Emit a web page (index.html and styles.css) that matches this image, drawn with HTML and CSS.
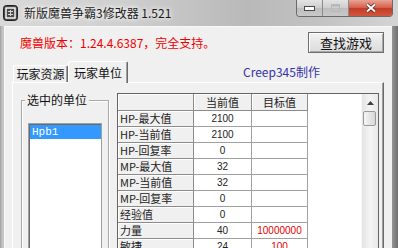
FILE: index.html
```html
<!DOCTYPE html>
<html>
  <head>
    <meta charset="utf-8" />
    <title>新版魔兽争霸3修改器 1.521</title>
    <link rel="stylesheet" href="styles.css">
  </head>
  <body>
    <div id="window">
      <div class="titlebar">
        <svg class="app-icon" width="15" height="16" viewBox="0 0 15 16">
          <rect x="0.5" y="0.5" width="14" height="15" rx="3" fill="#4a4a4a" stroke="#1e1e1e"/>
          <rect x="3" y="3" width="9" height="10" fill="none" stroke="#fff" stroke-width="1.4"/>
          <path d="M5 6.5h5M5 9.5h5M7.5 5v6" stroke="#d8d8d8" stroke-width="1"/>
        </svg>
        <span class="title">新版魔兽争霸3修改器 1.521</span>
        <div class="caption">
          <div class="cap-btn">
            <svg width="11" height="5" viewBox="0 0 11 5"><rect x="0.5" y="0.5" width="10" height="4" fill="#fff" stroke="#4a4a4a"/></svg>
          </div>
          <div class="cap-btn">
            <svg width="9" height="8" viewBox="0 0 9 8"><rect x="0.5" y="0.5" width="8" height="7" fill="none" stroke="#b8b8b8"/><rect x="1" y="1" width="7" height="1.5" fill="#b8b8b8"/></svg>
          </div>
          <div class="cap-btn cap-close">
            <svg width="12" height="10" viewBox="0 0 12 10"><path d="M2 1.5l8 7M10 1.5l-8 7" stroke="#5a2018" stroke-width="3.4"/><path d="M2 1.5l8 7M10 1.5l-8 7" stroke="#fff" stroke-width="2"/></svg>
          </div>
        </div>
      </div>

      <div class="client">
        <div class="top-row">
          <span class="version">魔兽版本：1.24.4.6387，完全支持。</span>
          <button class="find-btn" type="button">查找游戏</button>
        </div>

        <div class="tab-row">
          <div class="tab">玩家资源</div>
          <div class="tab active">玩家单位</div>
          <span class="author">Creep345制作</span>
        </div>

        <div class="tab-panel">
          <fieldset class="unit-group">
            <legend>选中的单位</legend>
            <div class="listbox">
              <div class="list-item selected">Hpb1</div>
            </div>
          </fieldset>

          <div class="grid-view">
            <div class="grid">
              <div class="cell head"></div>
              <div class="cell head">当前值</div>
              <div class="cell head">目标值</div>

              <div class="cell name">HP-最大值</div><div class="cell val">2100</div><div class="cell val"></div>
              <div class="cell name">HP-当前值</div><div class="cell val">2100</div><div class="cell val"></div>
              <div class="cell name">HP-回复率</div><div class="cell val">0</div><div class="cell val"></div>
              <div class="cell name">MP-最大值</div><div class="cell val">32</div><div class="cell val"></div>
              <div class="cell name">MP-当前值</div><div class="cell val">32</div><div class="cell val"></div>
              <div class="cell name">MP-回复率</div><div class="cell val">0</div><div class="cell val"></div>
              <div class="cell name">经验值</div><div class="cell val">0</div><div class="cell val"></div>
              <div class="cell name">力量</div><div class="cell val">40</div><div class="cell val target">10000000</div>
              <div class="cell name">敏捷</div><div class="cell val">24</div><div class="cell val target">100</div>
            </div>
            <div class="grid-empty"></div>
            <div class="vscroll">
              <div class="scroll-up">
                <svg width="7" height="4" viewBox="0 0 7 4"><path d="M0 4L3.5 0L7 4z" fill="#404040"/></svg>
              </div>
              <div class="scroll-thumb"></div>
            </div>
          </div>
        </div>
      </div>
    </div>
  </body>
</html>
```

FILE: styles.css
```css
/* Old-style WinForms trainer window */
body {
  margin: 0;
  padding: 0;
  width: 398px;
  height: 248px;
  overflow: hidden;
  font-family: "Noto Sans CJK SC", "Liberation Sans", sans-serif;
  font-size: 12px;
  color: #111;
}
#window {
  width: 398px;
  height: 248px;
  background: linear-gradient(to right, #9c9c9c 0, #c4c4c4 2px, #c9c9c9 60%, #bcbcbc 97%, #6e6e6e 100%);
  display: flex;
  flex-direction: column;
}
.titlebar {
  height: 26px;
  flex: none;
  display: flex;
  align-items: flex-start;
  background: linear-gradient(to right, #d9d9d9, #cfcfcf 30%, #b9b9b9 62%, #c2c2c2 80%, #d4d4d4);
}
.app-icon {
  margin: 5px 0 0 3px;
  flex: none;
}
.title {
  margin: 5px 0 0 6px;
  line-height: 16px;
  font-size: 12px;
  color: #1a1a1a;
  text-shadow: 0 0 4px #fff, 0 0 6px rgba(255, 255, 255, 0.9);
}
.caption {
  margin-left: auto;
  margin-right: 5px;
  display: flex;
  border: 1px solid #6a6a6a;
  border-top: none;
  border-radius: 0 0 4px 4px;
  overflow: hidden;
}
.cap-btn {
  width: 25px;
  height: 16px;
  display: flex;
  align-items: center;
  justify-content: center;
  background: linear-gradient(#e4e4e4, #cdcdcd 50%, #bdbdbd 51%, #c9c9c9);
  border-right: 1px solid #8c8c8c;
}
.cap-close {
  width: 43px;
  border-right: none;
  background: linear-gradient(#e8a393, #d4604c 48%, #c53c27 52%, #d2553d);
}
.client {
  flex: 1;
  margin-left: 4px;
  margin-right: 6px;
  background-color: #f0f0f0;
  border-top: 1px solid #f9f9f9;
  border-left: 1px solid #f9f9f9;
  display: flex;
  flex-direction: column;
}
.top-row {
  display: flex;
  align-items: center;
  justify-content: space-between;
  padding: 5px 8px 0 15px;
}
.version {
  color: #f00000;
  line-height: 16px;
}
.find-btn {
  width: 76px;
  height: 21px;
  padding: 0;
  font-family: "Noto Sans CJK SC", sans-serif;
  font-size: 13px;
  line-height: 17px;
  color: #111;
  border: 1px solid #6e6e6e;
  background: linear-gradient(#f4f4f4, #e6e6e6 50%, #dcdcdc);
  box-shadow: inset 1px 1px 0 #fff, inset -1px -1px 0 #a8a8a8;
}
.tab-row {
  height: 29px;
  display: flex;
  align-items: flex-end;
  padding-left: 8px;
}
.tab {
  width: 55px;
  height: 17px;
  box-sizing: border-box;
  display: flex;
  align-items: center;
  justify-content: center;
  line-height: 14px;
  background-color: #f0f0f0;
  border-top: 1px solid #fff;
  border-left: 1px solid #fff;
  border-right: 1px solid #696969;
  box-shadow: inset -1px 0 0 #a0a0a0;
  border-radius: 2px 2px 0 0;
}
.tab.active {
  width: 60px;
  height: 22px;
  margin-bottom: -1px;
  position: relative;
  z-index: 1;
}
.author {
  margin-left: 115px;
  margin-bottom: 3px;
  line-height: 14px;
  color: #3434a8;
}
.tab-panel {
  flex: 1;
  margin-left: 7px;
  width: 372px;
  box-sizing: border-box;
  border-top: 1px solid #fff;
  border-left: 1px solid #fff;
  border-right: 1px solid #696969;
  box-shadow: inset -1px 0 0 #a0a0a0;
  padding: 10px 0 0 8px;
  display: flex;
  align-items: flex-start;
}
.unit-group {
  width: 88px;
  height: 200px;
  box-sizing: border-box;
  margin: 0;
  padding: 0 0 0 3px;
  border: 1px solid #a8a8a8;
  box-shadow: 1px 1px 0 #fff, inset 1px 1px 0 #fff;
  flex: none;
}
.unit-group legend {
  padding: 0 2px;
  line-height: 14px;
  font-size: 12px;
  background-color: #f0f0f0;
}
.listbox {
  width: 74px;
  height: 160px;
  box-sizing: border-box;
  margin: 16px 0 0 3px;
  border: 1px solid #a0a0a0;
  box-shadow: inset 1px 1px 0 #696969;
  background-color: #fff;
  padding: 1px 0 0 1px;
}
.list-item {
  height: 14px;
  line-height: 14px;
  padding-left: 2px;
  font-family: "Liberation Mono", "Noto Sans CJK SC", monospace;
  font-size: 11px;
}
.list-item.selected {
  background-color: #3399ff;
  color: #fff;
}
.grid-view {
  width: 262px;
  height: 170px;
  box-sizing: border-box;
  margin-left: 8px;
  border: 1px solid #646464;
  background-color: #fff;
  display: flex;
  flex: none;
}
.grid {
  display: grid;
  grid-template-columns: 76px 58px 56px;
  grid-auto-rows: 16px;
  grid-template-rows: 17px;
  align-self: flex-start;
}
.cell {
  box-sizing: border-box;
  border-right: 1px solid #a0a0a0;
  border-bottom: 1px solid #a0a0a0;
  font-size: 11px;
  line-height: 15px;
  color: #222;
}
.cell.head {
  background-color: #f0f0f0;
  box-shadow: inset 1px 1px 0 #fff;
  text-align: center;
  line-height: 16px;
  border-right-color: #8c8c8c;
  border-bottom-color: #8c8c8c;
}
.cell.name {
  background-color: #f0f0f0;
  box-shadow: inset 1px 1px 0 #fff;
  padding-left: 2px;
  border-right-color: #8c8c8c;
  border-bottom-color: #8c8c8c;
}
.cell.val {
  text-align: center;
  font-family: "Liberation Sans", sans-serif;
  font-size: 10px;
}
.cell.target {
  color: #e00000;
}
.grid-empty {
  flex: 1;
}
.vscroll {
  width: 17px;
  flex: none;
  background: linear-gradient(to right, #e4e4e4, #f4f4f4 50%, #e8e8e8);
  border-left: 1px solid #f8f8f8;
  box-sizing: border-box;
}
.scroll-up {
  height: 17px;
  display: flex;
  align-items: center;
  justify-content: center;
}
.scroll-thumb {
  margin: 0 2px 0 1px;
  height: 15px;
  border: 1px solid #9a9a9a;
  border-radius: 2px;
  box-sizing: border-box;
  background: linear-gradient(to right, #f6f6f6, #e6e6e6 50%, #d8d8d8);
}
```
